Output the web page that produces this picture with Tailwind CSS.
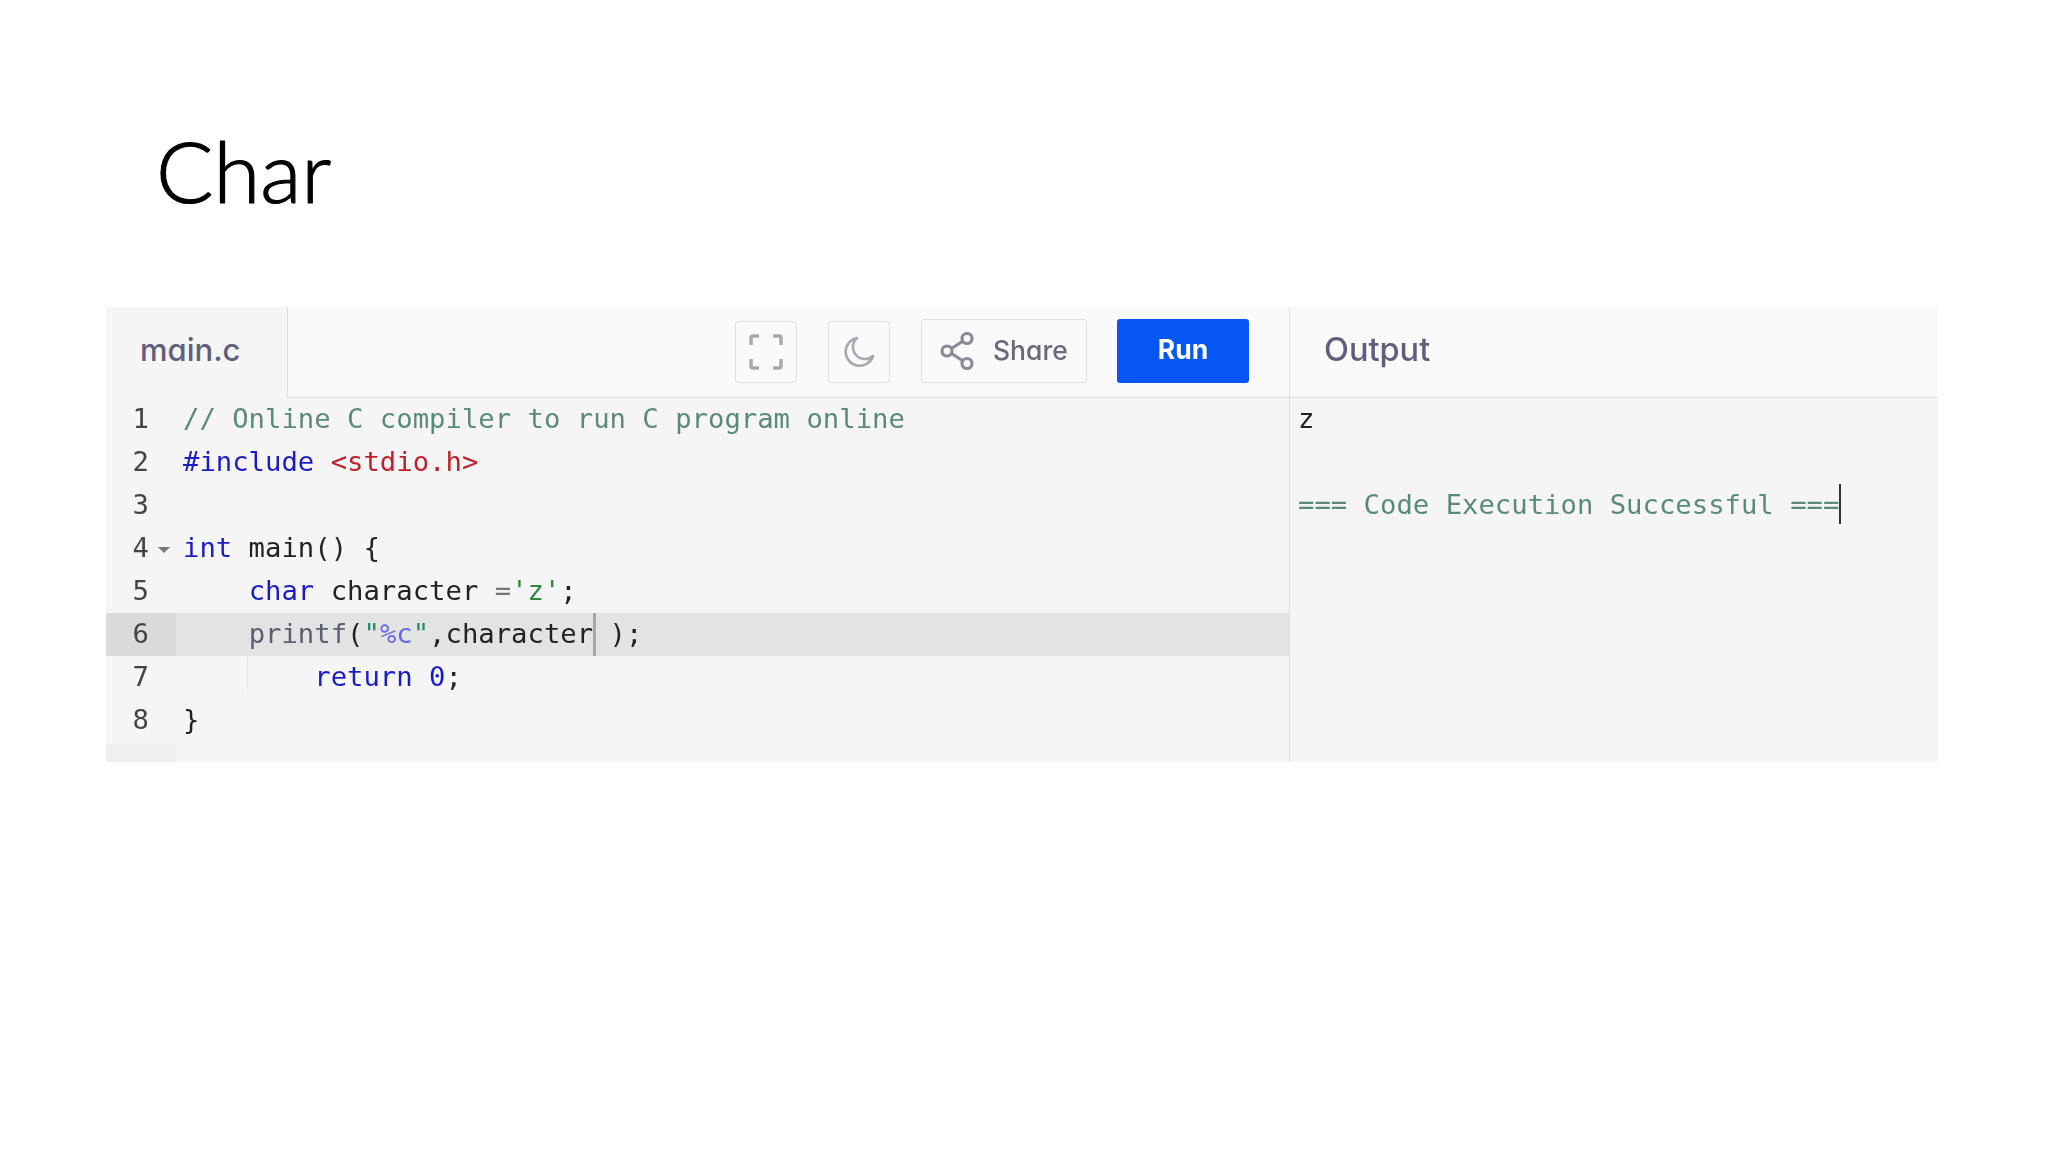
<!DOCTYPE html>
<html>
<head>
<meta charset="utf-8">
<script src="https://cdn.jsdelivr.net/npm/@tailwindcss/browser@4"></script>
</head>
<body class="bg-white w-[2048px] h-[1152px] overflow-hidden font-['Inter',sans-serif]">
<h1 class="h-[307px] pl-[156px] pt-[115px] text-[85px] leading-[110px] font-light text-black font-['Lato',sans-serif] [-webkit-text-stroke:1.2px_black] blur-[0.3px]">Char</h1>
<div class="ml-[106px] w-[1832px] h-[455px] flex blur-[0.5px]">
  <section class="w-[1183px] flex flex-col">
    <header class="h-[91px] flex bg-[#fafafa] border-b border-[#dfdfdf]">
      <div class="w-[182px] h-[91px] bg-[#f5f5f5] border-r border-[#dfdfdf] pl-[34px] pb-[5px] flex items-center text-[31px] font-medium text-[#5f5f7c] [font-feature-settings:'cv11']">main.c</div>
      <div class="flex-1 flex items-start justify-end pt-[12px] pr-[40px] [font-feature-settings:'cv11']">
        <button class="w-[62px] h-[62px] mt-[2px] border border-[#dedede] rounded-[3px] flex items-center justify-center">
          <svg width="34" height="36" viewBox="0 0 34 36" fill="none" stroke="#a8a8b0" stroke-width="3.5"><path d="M2 11V4q0-2 2-2h6M24 2h6q2 0 2 2v7M32 25v7q0 2-2 2h-6M10 34H4q-2 0-2-2v-7"/></svg>
        </button>
        <button class="w-[62px] h-[62px] mt-[2px] ml-[31px] border border-[#dedede] rounded-[3px] flex items-center justify-center">
          <svg width="32" height="32" viewBox="0 0 32 32" fill="none" stroke="#a8a8b0" stroke-width="2.6"><path d="M14 2A14 14 0 1 0 30 20 A12 12 0 0 1 14 2Z" stroke-linejoin="round"/></svg>
        </button>
        <button class="w-[166px] h-[64px] ml-[31px] border border-[#dedede] rounded-[3px] flex items-center pl-[18px] gap-[17px] pb-[1px] text-[26.5px] font-medium text-[#696979]">
          <svg width="36" height="38" viewBox="0 0 36 38" fill="none" stroke="#8b8b96" stroke-width="3.2"><circle cx="7" cy="19" r="5"/><circle cx="27" cy="6.5" r="5"/><circle cx="27" cy="31.5" r="5"/><path d="M11.5 16.5 23 9M11.5 21.5 23 29"/></svg>
          Share
        </button>
        <button class="w-[132px] h-[64px] ml-[30px] bg-[#0556f3] rounded-[3px] text-white text-[26.5px] font-bold pb-[2px]">Run</button>
      </div>
    </header>
    <div class="flex-1 flex bg-[#f5f5f5] font-['DejaVu_Sans_Mono',monospace] text-[27.25px] leading-[41px] text-[#222]">
      <div class="w-[70px] shrink-0 flex flex-col text-[#444] text-right">
        <div class="h-[43px] pr-[27px]">1</div>
        <div class="h-[43px] pr-[27px]">2</div>
        <div class="h-[43px] pr-[27px]">3</div>
        <div class="h-[43px] pr-[27px] relative">4<span class="absolute left-[52px] top-[20px] w-0 h-0 border-x-[6px] border-x-transparent border-t-[6px] border-t-[#777]"></span></div>
        <div class="h-[43px] pr-[27px]">5</div>
        <div class="h-[43px] pr-[27px] bg-[#dadada]">6</div>
        <div class="h-[43px] pr-[27px]">7</div>
        <div class="h-[43px] pr-[27px]">8</div>
        <div class="flex-1 mt-[2px] bg-[#efefef]"></div>
      </div>
      <pre class="flex-1 pl-[7px] font-['DejaVu_Sans_Mono',monospace] leading-[41px]"><div class="h-[43px] text-[#5b8a76]">// Online C compiler to run C program online</div><div class="h-[43px]"><span class="text-[#1c1cc4]">#include</span> <span class="text-[#c0202c]">&lt;stdio.h&gt;</span></div><div class="h-[43px]"></div><div class="h-[43px]"><span class="text-[#1c1cc4]">int</span> main() {</div><div class="h-[43px]">    <span class="text-[#1c1cc4]">char</span> character <span class="text-[#777]">=</span><span class="text-[#2a8a3a]">'z'</span>;</div><div class="h-[43px] -ml-[7px] pl-[7px] bg-[#e3e3e3]">    <span class="text-[#5a6070]">printf</span>(<span class="text-[#2a8a6a]">"</span><span class="text-[#6a6ae0]">%c</span><span class="text-[#2a8a6a]">"</span>,character<span class="inline-block w-0 h-[43px] align-top border-l-[3px] border-[#a9a9a9] -mr-[3px]"></span> );</div><div class="h-[43px] relative">        <span class="text-[#1c1cc4]">return</span> <span class="text-[#1c1cc4]">0</span>;<span class="absolute left-[64px] top-0 h-[34px] border-l border-dotted border-[#d8d8d8]"></span></div><div class="h-[43px]">}</div></pre>
    </div>
  </section>
  <section class="w-[649px] flex flex-col border-l border-[#dfdfdf]">
    <header class="h-[91px] bg-[#fafafa] border-b border-[#dfdfdf] pl-[34px] pb-[3px] flex items-center text-[32.5px] font-medium text-[#5f5f7c]">Output</header>
    <pre class="flex-1 bg-[#f5f5f5] pl-[8px] font-['DejaVu_Sans_Mono',monospace] text-[27.25px] leading-[41px] text-[#222]"><div class="h-[43px]">z</div><div class="h-[43px]"></div><div class="h-[43px] text-[#5b8a76]">=== Code Execution Successful ===<span class="inline-block w-0 h-[40px] align-top border-l-2 border-[#333]"></span></div></pre>
  </section>
</div>
</body>
</html>
